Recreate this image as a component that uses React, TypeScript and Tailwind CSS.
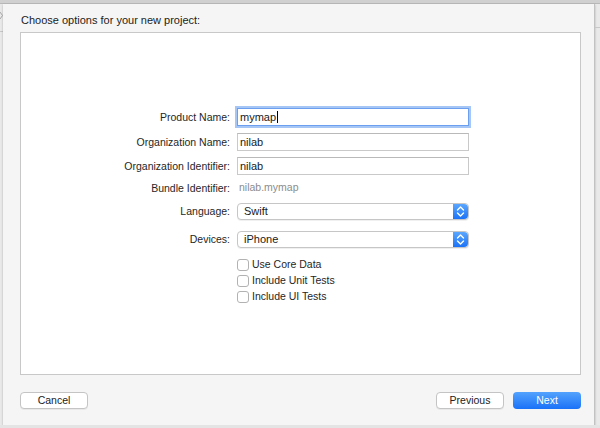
import React from 'react';

const font = "font-['Liberation_Sans','Helvetica_Neue',Arial,sans-serif]";

const Stepper: React.FC = () => (
  <div className="w-[15px] h-full rounded-r-[4px] bg-gradient-to-b from-[#5aa6fd] to-[#1a72f7] flex items-center justify-center">
    <svg width="9" height="13" viewBox="0 0 9 13" fill="none">
      <path d="M1.5 5 L4.5 2 L7.5 5" stroke="white" strokeWidth="1.4" strokeLinecap="round" strokeLinejoin="round" />
      <path d="M1.5 8 L4.5 11 L7.5 8" stroke="white" strokeWidth="1.4" strokeLinecap="round" strokeLinejoin="round" />
    </svg>
  </div>
);

const Label: React.FC<{ children: React.ReactNode }> = ({ children }) => (
  <div className="w-[216px] pr-[7px] text-right text-[10.5px] text-[#262626] leading-none">{children}</div>
);

const TextField: React.FC<{ value: string; focused?: boolean }> = ({ value, focused }) => (
  <div
    className={
      focused
        ? 'w-[232px] h-[18px] bg-white border border-[#6c9ff0] shadow-[0_0_0_2px_#a6c6f6] flex items-center pl-[2px] text-[11px] text-[#1a1a1a]'
        : 'w-[232px] h-[18px] bg-white border border-[#c9c9c9] border-t-[#b9b9b9] flex items-center pl-[2px] text-[11px] text-[#1a1a1a]'
    }
  >
    {value}
    {focused && <span className="w-px h-[12px] bg-black ml-px" />}
  </div>
);

const Popup: React.FC<{ value: string }> = ({ value }) => (
  <div className="w-[232px] h-[17px] bg-white border border-[#c6c6c6] rounded-[4px] flex items-center shadow-[0_1px_0_rgba(0,0,0,0.06)]">
    <div className="flex-1 pl-[6px] text-[11px] text-[#1a1a1a]">{value}</div>
    <Stepper />
  </div>
);

const Check: React.FC<{ label: string }> = ({ label }) => (
  <div className="flex items-center h-[12px]">
    <div className="w-[216px]" />
    <div className="w-[12px] h-[12px] bg-white border border-[#b2b2b2] rounded-[3px]" />
    <span className="ml-[3px] text-[10.5px] text-[#262626]">{label}</span>
  </div>
);

const Button: React.FC<{ children: React.ReactNode; primary?: boolean }> = ({ children, primary }) => (
  <div
    className={
      primary
        ? 'w-[68px] h-[17px] rounded-[4px] bg-gradient-to-b from-[#53a2fd] to-[#1871f7] text-white text-[10.5px] flex items-center justify-center'
        : 'w-[68px] h-[17px] rounded-[4px] bg-white border border-[#c4c4c4] shadow-[0_1px_0_rgba(0,0,0,0.05)] text-[#222] text-[10.5px] flex items-center justify-center'
    }
  >
    {children}
  </div>
);

export default function App() {
  return (
    <div className={`w-[600px] h-[428px] bg-[#e9e9e9] flex flex-col overflow-hidden ${font}`}>
      {/* top strip */}
      <div className="h-[4px] bg-[#d0d0d0] border-b border-[#b8b8b8]" />

      <div className="flex flex-1">
        {/* left sliver */}
        <div className="w-[3px] flex flex-col">
          <div className="h-[8px]" />
          <svg width="3" height="7" viewBox="0 0 3 7">
            <path d="M0 0 L2.5 3.5 L0 7" stroke="#a8a8a8" strokeWidth="1" fill="none" />
          </svg>
          <div className="h-[12px]" />
          <div className="h-px bg-[#c8c8c8]" />
        </div>

        {/* sheet */}
        <div className="w-[592px] bg-[#f5f5f5] border-r border-[#c2c2c2] shadow-[0_1px_2px_rgba(0,0,0,0.25)] flex flex-col">
          <div className="pl-[18px] pt-[9px] h-[28px] text-[11px] leading-[14px] text-[#1c1c1c]">
            Choose options for your new project:
          </div>

          <div className="ml-[17px] w-[561px] h-[343px] bg-white border border-[#c8c8c8] flex flex-col pt-[75px]">
            <div className="flex items-center">
              <Label>Product Name:</Label>
              <TextField value="mymap" focused />
            </div>
            <div className="flex items-center mt-[7px]">
              <Label>Organization Name:</Label>
              <TextField value="nilab" />
            </div>
            <div className="flex items-center mt-[6px]">
              <Label>Organization Identifier:</Label>
              <TextField value="nilab" />
            </div>
            <div className="flex items-center h-[16px] mt-[5px]">
              <Label>Bundle Identifier:</Label>
              <div className="pl-[2px] text-[10.5px] text-[#8c8c8c]">nilab.mymap</div>
            </div>
            <div className="flex items-center mt-[7px]">
              <Label>Language:</Label>
              <Popup value="Swift" />
            </div>
            <div className="flex items-center mt-[11px]">
              <Label>Devices:</Label>
              <Popup value="iPhone" />
            </div>
            <div className="flex flex-col gap-[4px] mt-[11px]">
              <Check label="Use Core Data" />
              <Check label="Include Unit Tests" />
              <Check label="Include UI Tests" />
            </div>
          </div>

          <div className="flex items-center mt-[17px] ml-[17px] w-[561px]">
            <Button>Cancel</Button>
            <div className="flex-1" />
            <Button>Previous</Button>
            <div className="w-[9px]" />
            <Button primary>Next</Button>
          </div>
        </div>

        {/* right sliver */}
        <div className="flex-1 flex flex-col">
          <div className="h-[23px]" />
          <div className="h-px bg-[#c8c8c8]" />
        </div>
      </div>

      <div className="h-[3px] bg-[#e4e4e4]" />
    </div>
  );
}
